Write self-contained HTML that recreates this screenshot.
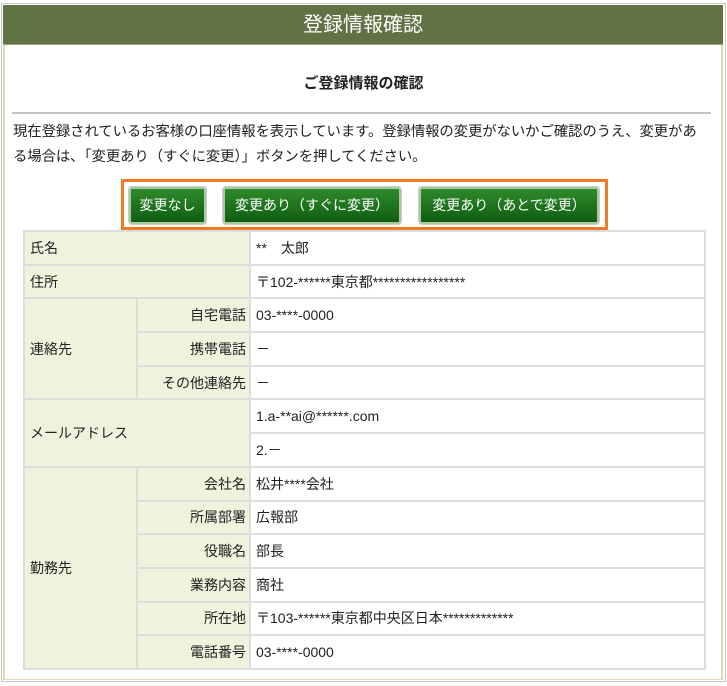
<!DOCTYPE html>
<html><head><meta charset="utf-8"><style>
*{margin:0;padding:0;box-sizing:border-box}
body{width:727px;height:686px;background:#fff;font-family:"Liberation Sans","Noto Sans CJK JP",sans-serif;color:#222;position:relative;overflow:hidden}
.frame{position:absolute;left:1px;top:3px;width:725px;height:679px;border:1px solid #c8c8c8}
.inner{position:absolute;left:3px;top:5px;width:720px;height:675px;border-left:2px solid #e3d7b0;border-right:2px solid #e3d7b0;border-bottom:1px solid #e3d7b0}
.hdr{position:absolute;left:3px;top:5px;width:720px;height:40px;background:#617344;color:#fff;font-size:20px;text-align:center;line-height:40px;border-bottom:1px solid #9aa77a}
.ttl{position:absolute;left:0;width:727px;top:72px;text-align:center;font-weight:bold;font-size:15px}
.hr{position:absolute;left:12px;top:112px;width:699px;height:2px;background:#c4c4c4}
.p{position:absolute;left:13px;top:120px;width:698px;font-size:14.4px;line-height:25px;letter-spacing:-0.1px}
.obox{position:absolute;left:121px;top:179px;width:487px;height:51px;border:3px solid #ee7a2a}
.btn{position:absolute;top:187px;height:37px;background:linear-gradient(#2f8a2b,#0f5e10);border:2px solid #a9c9a0;border-radius:3px;color:#fff;font-size:14px;line-height:33px;text-align:center;box-shadow:0 0 0 1px #ccc}
table{position:absolute;left:23px;top:230px;width:683px;border-collapse:collapse;font-size:14px}
td{border:2px solid #ddd;height:33.7px;padding:0 5px}
td.l{background:#eff3dd;width:113px}
td.r{background:#eff3dd;text-align:right;width:113px;padding-right:3px}
</style></head><body>
<div class="frame"></div><div class="inner"></div>
<div class="hdr">登録情報確認</div>
<div class="ttl">ご登録情報の確認</div>
<div class="hr"></div>
<div class="p">現在登録されているお客様の口座情報を表示しています。登録情報の変更がないかご確認のうえ、変更があ<br>る場合は、「変更あり（すぐに変更）」ボタンを押してください。</div>
<div class="obox"></div>
<div class="btn" style="left:129px;width:77px">変更なし</div>
<div class="btn" style="left:223px;width:178px">変更あり（すぐに変更）</div>
<div class="btn" style="left:419px;width:180px">変更あり（あとで変更）</div>
<table>
<tr><td class="l" colspan="2">氏名</td><td>**　太郎</td></tr>
<tr><td class="l" colspan="2">住所</td><td>〒102-******東京都*****************</td></tr>
<tr><td class="l" rowspan="3">連絡先</td><td class="r">自宅電話</td><td>03-****-0000</td></tr>
<tr><td class="r">携帯電話</td><td>－</td></tr>
<tr><td class="r">その他連絡先</td><td>－</td></tr>
<tr><td class="l" colspan="2" rowspan="2">メールアドレス</td><td>1.a-**ai@******.com</td></tr>
<tr><td>2.－</td></tr>
<tr><td class="l" rowspan="6">勤務先</td><td class="r">会社名</td><td>松井****会社</td></tr>
<tr><td class="r">所属部署</td><td>広報部</td></tr>
<tr><td class="r">役職名</td><td>部長</td></tr>
<tr><td class="r">業務内容</td><td>商社</td></tr>
<tr><td class="r">所在地</td><td>〒103-******東京都中央区日本*************</td></tr>
<tr><td class="r">電話番号</td><td>03-****-0000</td></tr>
</table>
</body></html>
